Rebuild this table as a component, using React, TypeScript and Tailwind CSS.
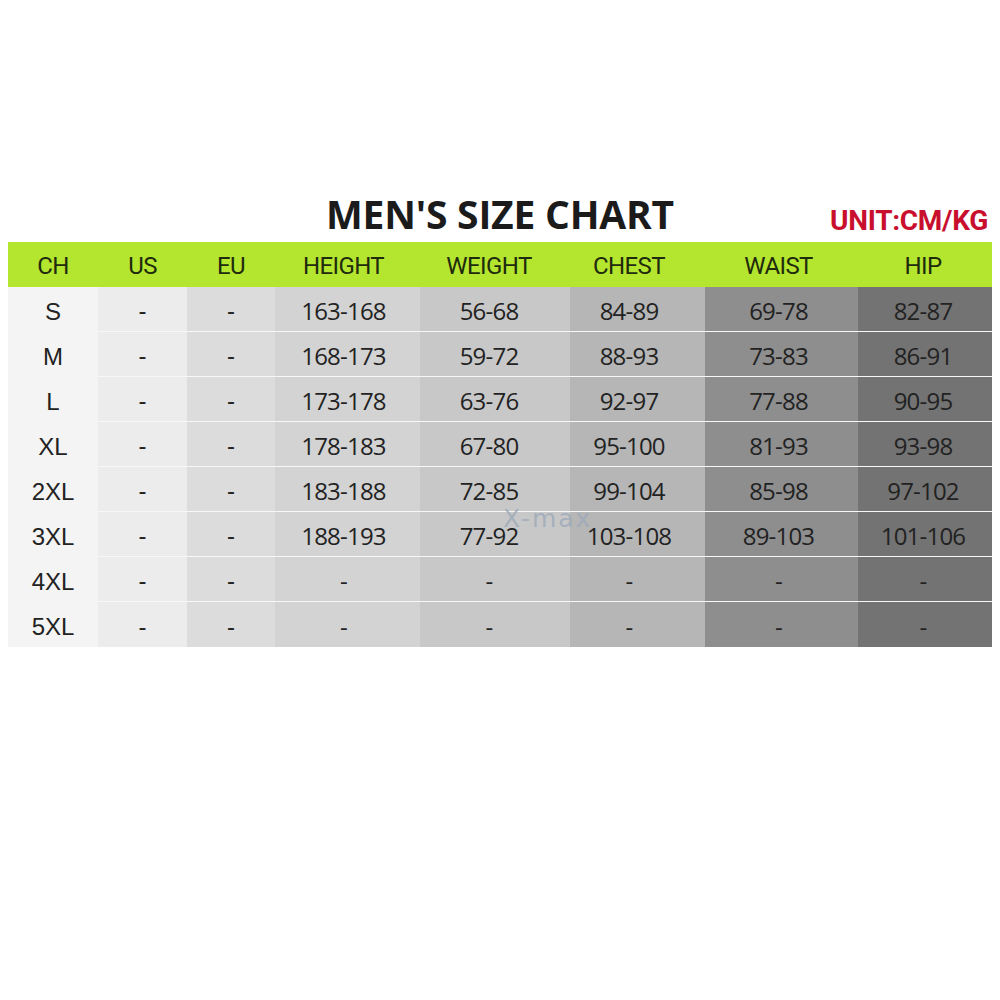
import React from 'react';

type Col = { label: string; width: string; bg: string; pad: string };

const columns: Col[] = [
  { label: 'CH', width: 'w-[90px]', bg: 'bg-[#f4f4f4]', pad: '' },
  { label: 'US', width: 'w-[89px]', bg: 'bg-[#ececec]', pad: '' },
  { label: 'EU', width: 'w-[88px]', bg: 'bg-[#dcdcdc]', pad: '' },
  { label: 'HEIGHT', width: 'w-[145px]', bg: 'bg-[#d3d3d3]', pad: 'pr-[8px]' },
  { label: 'WEIGHT', width: 'w-[150px]', bg: 'bg-[#c8c8c8]', pad: 'pr-[12px]' },
  { label: 'CHEST', width: 'w-[135px]', bg: 'bg-[#b6b6b6]', pad: 'pr-[17px]' },
  { label: 'WAIST', width: 'w-[153px]', bg: 'bg-[#8e8e8e]', pad: 'pr-[6px]' },
  { label: 'HIP', width: 'w-[134px]', bg: 'bg-[#737373]', pad: 'pr-[4px]' },
];

const rows: string[][] = [
  ['S', '-', '-', '163-168', '56-68', '84-89', '69-78', '82-87'],
  ['M', '-', '-', '168-173', '59-72', '88-93', '73-83', '86-91'],
  ['L', '-', '-', '173-178', '63-76', '92-97', '77-88', '90-95'],
  ['XL', '-', '-', '178-183', '67-80', '95-100', '81-93', '93-98'],
  ['2XL', '-', '-', '183-188', '72-85', '99-104', '85-98', '97-102'],
  ['3XL', '-', '-', '188-193', '77-92', '103-108', '89-103', '101-106'],
  ['4XL', '-', '-', '-', '-', '-', '-', '-'],
  ['5XL', '-', '-', '-', '-', '-', '-', '-'],
];

export default function App() {
  return (
    <div className="w-[1000px] h-[1000px] bg-white">
      {/* title line */}
      <div className="grid grid-cols-[1fr_auto_1fr] items-end pt-[189px] h-[242px]">
        <div />
        <h1 className="font-['Open_Sans',sans-serif] font-bold text-[39px] leading-[44px] text-[#1b1b1b] tracking-[-0.2px] pb-[6px]">
          MEN'S SIZE CHART
        </h1>
        <div className="flex justify-end pr-[12px] pb-[6px]">
          <span className="font-['Roboto',sans-serif] font-bold text-[28px] leading-[30px] text-[#c8102e] tracking-[-0.3px]">
            UNIT:CM/KG
          </span>
        </div>
      </div>

      {/* table */}
      <div className="relative ml-[8px] w-[984px]">
        <div className="flex h-[45px] bg-[#b4e52f]">
          {columns.map((c) => (
            <div
              key={c.label}
              className={`${c.width} ${c.pad} flex items-center justify-center pt-[2px] font-['Roboto',sans-serif] text-[24px] text-[#1e2b0c] tracking-[-0.6px]`}
            >
              {c.label}
            </div>
          ))}
        </div>
        <div className="flex">
          {columns.map((c, ci) => (
            <div key={c.label} className={`${c.width} ${c.bg} flex flex-col`}>
              {rows.map((r, ri) => (
                <div
                  key={ri}
                  className={`h-[45px] ${c.pad} pt-[4px] flex items-center justify-center ${
                    ci > 0 && ri < rows.length - 1 ? 'border-b border-[#f7f7f7]' : ''
                  } ${
                    ci < 3
                      ? "font-['Liberation_Sans',sans-serif] text-[24px]"
                      : "font-['Open_Sans',sans-serif] text-[24px] tracking-[-0.8px]"
                  } text-[#222]`}
                >
                  {r[ci]}
                </div>
              ))}
            </div>
          ))}
        </div>
        {/* watermark */}
        <span className="absolute left-[495px] top-[264px] font-['DejaVu_Sans',sans-serif] text-[25px] leading-none text-[#9eabba] tracking-[2px] opacity-80">
          X-max
        </span>
      </div>
    </div>
  );
}
